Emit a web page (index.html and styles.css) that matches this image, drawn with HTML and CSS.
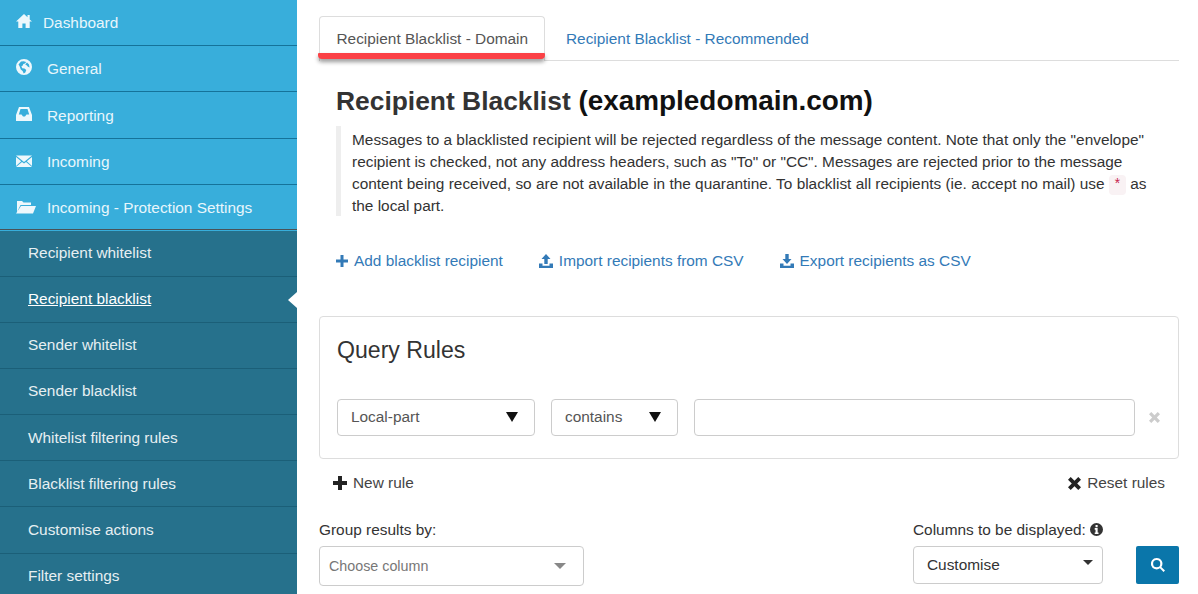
FILE: index.html
```html
<!DOCTYPE html>
<html lang="en">
<head>
<meta charset="utf-8">
<title>Recipient Blacklist</title>
<link rel="stylesheet" href="styles.css">
</head>
<body>
<div class="page">
  <nav class="sidebar">
    <ul class="menu">
      <li class="menu-item first"><svg class="mi" viewBox="0 0 16 16"><path d="M8 1 0 8.600h2.300V15h4.100v-4.500h3.200V15h4.100V8.600H16l-2.300-2.200V2h-2.200v2.300z"/></svg><span>Dashboard</span></li>
      <li class="menu-item"><svg class="mi" viewBox="0 0 16 16"><path fill-rule="evenodd" d="M8 0a8 8 0 1 0 0 16A8 8 0 0 0 8 0zM5 2.600l2.600-.4 2.600.8L9 4.600 7.300 5 6.800 6.500 5.400 7.200 6.200 9.300l2.300.3 1.800 1.400-1 2.500-1.600 1-1.100-2.500-1.800-1.600L3.500 7 2.500 5.500zM11 3.500l2 2 .6 3-1.600-.8-1.700-1.600-1.100-.5z"/></svg><span>General</span></li>
      <li class="menu-item low"><svg class="mi" viewBox="0 0 16 16"><path fill-rule="evenodd" d="M3 1h10l3 8v6H0V9zM4.500 3 2.800 8.500h2.700L7 10.500h2l1.500-2h2.700L11.500 3z"/></svg><span>Reporting</span></li>
      <li class="menu-item low"><svg class="mi" viewBox="0 0 16 16"><path d="M0 2.500h16L8 9zM0 4v9l5.200-4.800zM16 4v9l-5.200-4.800zM6 9l2 1.600L10 9l6 5H0z"/></svg><span>Incoming</span></li>
      <li class="menu-item low"><svg class="mi wide" viewBox="0 0 20 16"><path d="M1 2h5l1.500 1.500H15V6H4.500L1 13zM5 7h15l-3 7.500H0z"/></svg><span>Incoming - Protection Settings</span></li>
    </ul>
    <ul class="submenu">
      <li class="sub-item">Recipient whitelist</li>
      <li class="sub-item current"><u>Recipient blacklist</u></li>
      <li class="sub-item">Sender whitelist</li>
      <li class="sub-item">Sender blacklist</li>
      <li class="sub-item">Whitelist filtering rules</li>
      <li class="sub-item">Blacklist filtering rules</li>
      <li class="sub-item">Customise actions</li>
      <li class="sub-item">Filter settings</li>
    </ul>
  </nav>
  <main class="content">
    <div class="tabs">
      <div class="tab active">Recipient Blacklist - Domain</div>
      <div class="tab">Recipient Blacklist - Recommended</div>
    </div>
    <section class="intro">
      <h1><span class="h-dark">Recipient Blacklist</span> (exampledomain.com)</h1>
      <blockquote>Messages to a blacklisted recipient will be rejected regardless of the message content. Note that only the "envelope" recipient is checked, not any address headers, such as "To" or "CC". Messages are rejected prior to the message content being received, so are not available in the quarantine. To blacklist all recipients (ie. accept no mail) use <code>*</code> as the local part.</blockquote>
      <div class="actions">
        <a class="action"><svg class="ai" viewBox="0 0 12 12"><path d="M4.500 0h3v4.500H12v3H7.500V12h-3V7.500H0v-3h4.500z"/></svg>Add blacklist recipient</a>
        <a class="action"><svg class="ai big" viewBox="0 0 16 16"><path d="M8 1 12.500 6H9.700v5H6.300V6H3.500zM1 10.500h3.500v2.300h7v-2.300H15V15H1z"/></svg>Import recipients from CSV</a>
        <a class="action"><svg class="ai big" viewBox="0 0 16 16"><path d="M6.300 1h3.400v5h2.800L8 11 3.500 6h2.800zM1 10.500h3.500v2.300h7v-2.300H15V15H1z"/></svg>Export recipients as CSV</a>
      </div>
    </section>
    <section class="panel">
      <h2>Query Rules</h2>
      <div class="rule">
        <div class="select s-field">Local-part<i class="tri"></i></div>
        <div class="select s-op">contains<i class="tri"></i></div>
        <div class="input"></div>
        <svg class="rm" viewBox="0 0 12 12"><path d="M2.500 0 6 3.500 9.500 0 12 2.500 8.500 6 12 9.500 9.500 12 6 8.500 2.500 12 0 9.500 3.500 6 0 2.500z"/></svg>
      </div>
    </section>
    <div class="rule-actions">
      <span class="ra"><svg class="ra-i" viewBox="0 0 12 12"><path d="M4.300 0h3.400v4.300H12v3.400H7.700V12H4.300V7.700H0V4.300h4.300z"/></svg>New rule</span>
      <span class="ra"><svg class="ra-i small" viewBox="0 0 12 12"><path d="M2.500 0 6 3.500 9.500 0 12 2.500 8.500 6 12 9.500 9.500 12 6 8.500 2.500 12 0 9.500 3.500 6 0 2.500z"/></svg>Reset rules</span>
    </div>
    <div class="results">
      <div class="group">
        <label>Group results by:</label>
        <div class="select2">Choose column<i class="caret gray"></i></div>
      </div>
      <div class="cols">
        <div class="col-field">
          <label>Columns to be displayed: <svg class="info" viewBox="0 0 16 16"><path fill-rule="evenodd" d="M8 0a8 8 0 1 0 0 16A8 8 0 0 0 8 0zM6.800 2.500h2.600v2.600H6.800zM5.800 6.300h3.600v5.400h1.100v1.900h-4.700v-1.900h1V8.200h-1z"/></svg></label>
          <div class="select cust">Customise<i class="caret"></i></div>
        </div>
        <div class="search"><svg viewBox="0 0 16 16"><path fill-rule="evenodd" d="M6.500 0a6.500 6.500 0 0 1 5.300 10.300L16 14.400 14.300 16l-4.100-4.200A6.500 6.500 0 1 1 6.500 0zm0 2.400a4.100 4.100 0 1 0 0 8.200 4.100 4.100 0 0 0 0-8.200z"/></svg></div>
      </div>
    </div>
  </main>
</div>
</body>
</html>
```
FILE: styles.css
```css
* { box-sizing: border-box; }
html, body { margin: 0; padding: 0; height: 100%; overflow: hidden; background: #fff; }
body { font: 15.4px/22px "Liberation Sans", Arial, sans-serif; color: #333; }
ul { list-style: none; margin: 0; padding: 0; }

.page { display: flex; height: 594px; overflow: hidden; }

.sidebar { width: 297px; flex: none; background: #26718c; overflow: hidden; }
.menu { background: #38aedb; color: #e8f6fb; height: 231px; }
.menu-item { height: 46.2px; padding-left: 16px; display: flex; align-items: center; border-bottom: 1px solid #15739a; }
.menu-item.low { padding-top: 2px; }
.menu-item span { margin-left: 15px; }
.menu-item.first span { margin-left: 11px; }
.menu-item:last-child { height: 45.2px; border-bottom: 0; }
.mi { width: 16px; height: 16px; fill: #eef8fc; flex: none; margin-top: -3px; }
.mi.wide { width: 20px; margin-right: -4px; }

.submenu { border-top: 1px solid #4a5257; margin-top: -1.7px; }
.sub-item { height: 46.2px; padding: 0 0 0 28px; display: flex; align-items: center; color: #e6eff2; border-bottom: 1px solid #1b5f78; position: relative; }
.sub-item.current { color: #fff; }
.sub-item.current::after { content: ""; position: absolute; right: 0; top: 15px; border: 8px solid transparent; border-left-width: 0; border-right: 9px solid #fff; }

.content { flex: 1; min-width: 0; padding: 16px 19px 0 22px; }

.tabs { display: flex; height: 45px; border-bottom: 1px solid #ddd; }
.tab { padding: 12px 19px 0; height: 45px; color: #337ab7; margin-left: 2px; }
.tab.active { margin-left: 0; width: 226px; padding: 11px 0 0 16.5px; color: #555; background: #fff; border: 1px solid #ddd; border-bottom: 0; border-radius: 4px 4px 0 0; position: relative; }
.tab.active::after { content: ""; position: absolute; left: -2px; right: -1px; top: 36px; height: 6px; background: #fb4146; border-radius: 1px 1px 4px 4px; box-shadow: 0 3px 4px rgba(0,0,0,.4); }

.intro { padding-left: 17px; }
h1 { margin: 25px 0 0; font-size: 27.9px; line-height: 30px; font-weight: 700; color: #111; }
.h-dark { color: #333; font-size: 26.4px; }
blockquote { margin: 10px 0 0; padding: 2.500px 0 0 11px; border-left: 5.5px solid #eee; height: 90px; line-height: 22.2px; width: 824px; }
code { font: 13.9px "Liberation Mono", monospace; color: #c7254e; background: #f9f2f4; border-radius: 4px; padding: 2px 4.400px; }
.actions { display: flex; gap: 35px; margin-top: 33px; height: 24px; align-items: center; }
.action { color: #337ab7; display: flex; align-items: center; }
.ai { width: 12px; height: 12px; fill: #337ab7; margin-right: 6px; }
.ai.big { width: 16px; height: 16px; margin-right: 5px; }

.panel { margin-top: 43px; height: 143px; border: 1px solid #ddd; border-radius: 4px; padding: 0 0 0 17px; }
h2 { margin: 18px 0 0; font-size: 23.1px; line-height: 30px; font-weight: 400; color: #333; }
.rule { display: flex; align-items: center; gap: 16px; margin-top: 34px; }
.select, .input, .select2 { border: 1px solid #ccc; border-radius: 4px; background: #fff; height: 37px; display: flex; align-items: center; justify-content: space-between; position: relative; flex: none; }
.select { padding: 0 13px 2px; color: #555; }
.s-field { width: 198px; }
.s-op { width: 127px; }
.input { width: 441px; }
.tri { width: 0; height: 0; border: 6.500px solid transparent; border-top: 10px solid #111; border-bottom: 0; margin-top: 1px; margin-right: 3px; }
.rm { width: 11px; height: 11px; fill: #ccc; margin-left: -2px; flex: none; }

.rule-actions { display: flex; justify-content: space-between; padding: 0 14px; margin-top: 12px; height: 24px; align-items: center; }
.ra { display: flex; align-items: center; color: #444; }
.ra-i { width: 14px; height: 14px; fill: #222; margin-right: 6px; }
.ra-i.small { width: 13px; height: 13px; }

.results { display: flex; justify-content: space-between; margin-top: 24px; }
label { display: block; height: 27px; line-height: 22px; white-space: nowrap; }
.select2 { width: 265px; height: 40px; padding: 0 17px 0 9px; color: #777; font-size: 14.3px; }
.caret { width: 0; height: 0; border: 5px solid transparent; border-top: 5px solid #333; border-bottom: 0; }
.caret.gray { border-width: 6px 6px 0; border-top-color: #888; }
.cols { display: flex; gap: 33px; align-items: flex-start; }
.col-field { width: 190px; }
.cust { height: 38px; color: #333; padding: 0 13px; }
.cust .caret { margin-top: -6px; margin-right: -4px; }
.info { width: 13px; height: 13px; fill: #333; vertical-align: -1px; }
.search { width: 43px; height: 38px; margin-top: 27px; background: #0a76aa; border-radius: 2px; display: flex; align-items: center; justify-content: center; }
.search svg { width: 14px; height: 14px; fill: #fff; }
```
